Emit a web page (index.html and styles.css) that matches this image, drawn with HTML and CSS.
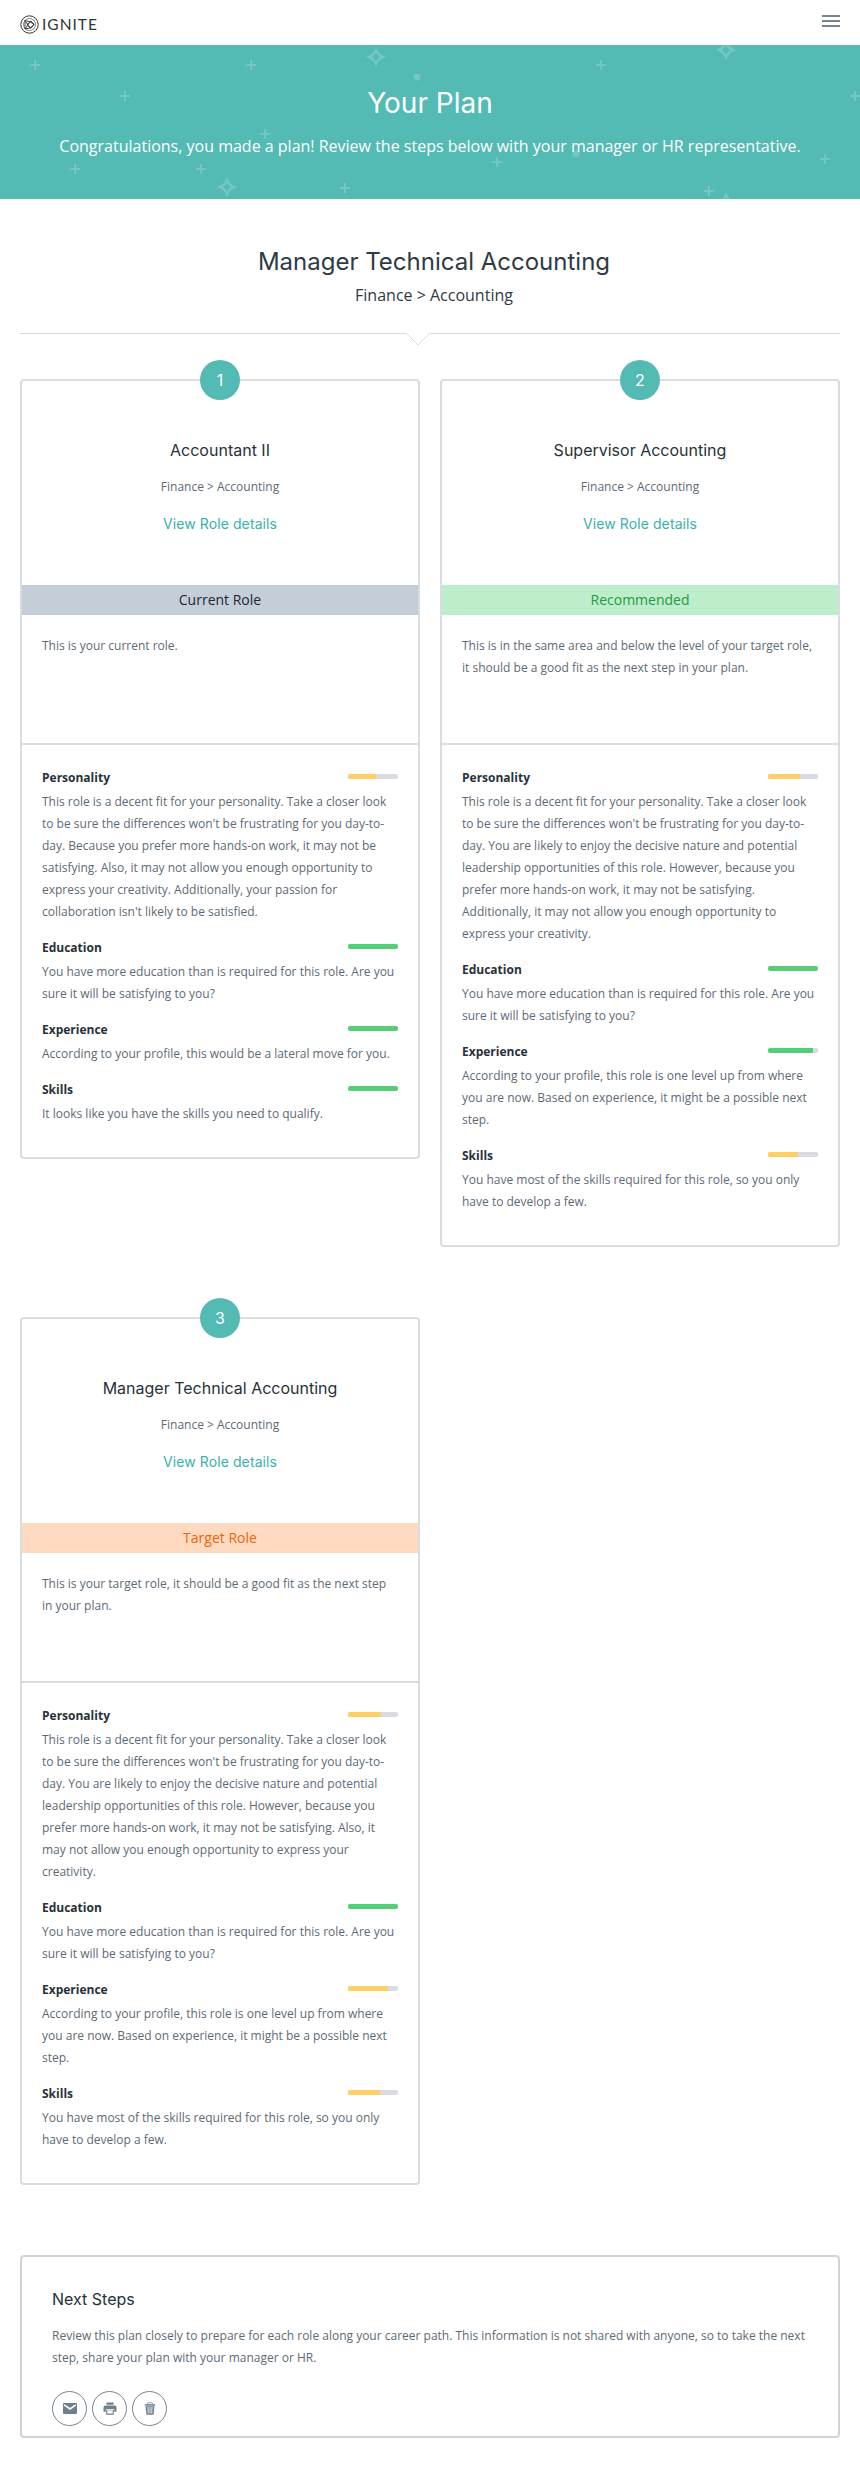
FILE: index.html
```html
<!DOCTYPE html>
<html lang="en">
<head>
<meta charset="utf-8">
<title>Your Plan</title>
<link rel="stylesheet" href="styles.css">
</head>
<body>
<header class="topbar">
  <div class="logo">
    <svg class="logo-mark" width="19" height="19" viewBox="0 0 19 19" fill="none" stroke="#333" stroke-width="1"><circle cx="9.5" cy="9.5" r="8.7"/><circle cx="9.5" cy="9.5" r="6" stroke-width=".6"/><path d="M5 5.5l5 1.2 4 2.800-4 3.500-5 1zM5 5.500l5 7.500M5 14l5-7.300M7 9.500l4-3.500 3 3.500-3 3.800z" stroke-width=".9"/></svg>
    <span class="logo-text">IGNITE</span>
  </div>
  <div class="menu"><i></i><i></i><i></i></div>
</header>
<section class="hero">
  <svg class="hero-art" width="860" height="154" viewBox="0 0 860 154" fill="none" stroke="#fff" stroke-width="2">
    <defs><path id="plus" d="M-5 0H5M0-5V5"/><path id="gem" stroke-width="2.500" d="M0-7Q2-2 7 0Q2 2 0 7Q-2 2-7 0Q-2-2 0-7z"/></defs>
    <use href="#plus" x="35" y="20"/><use href="#plus" x="251" y="20"/><use href="#plus" x="125" y="51"/><use href="#plus" x="265" y="89"/><use href="#plus" x="75" y="124"/><use href="#plus" x="201" y="124"/><use href="#plus" x="345" y="143"/><use href="#plus" x="601" y="20"/><use href="#plus" x="855" y="51"/><use href="#plus" x="497" y="117"/><use href="#plus" x="825" y="114"/><use href="#plus" x="709" y="146"/>
    <use href="#gem" x="376" y="12"/><use href="#gem" x="227" y="142"/><use href="#gem" x="726" y="5"/><use href="#gem" x="726" y="157"/>
    <circle cx="417" cy="32" r="3.5" fill="#fff" stroke="none"/><circle cx="576" cy="109" r="3.5" fill="#fff" stroke="none"/>
  </svg>
  <h1>Your Plan</h1>
  <p>Congratulations, you made a plan! Review the steps below with your manager or HR representative.</p>
</section>
<main>
  <div class="intro">
    <h2>Manager Technical Accounting</h2>
    <p>Finance &gt; Accounting</p>
    <svg class="notch" width="24" height="13" viewBox="0 0 24 13"><path d="M0 0H24L12 12z" fill="#fff"/><path d="M0.5.5L12 12 23.500.5" fill="none" stroke="#d8dde1"/></svg>
  </div>
  <div class="cards">
    <article class="card">
      <span class="badge">1</span>
      <div class="head"><h3>Accountant II</h3><p>Finance &gt; Accounting</p><a>View Role details</a></div>
      <div class="tag current">Current Role</div>
      <p class="why">This is your current role.</p>
      <div class="fit">
        <div class="row"><h4>Personality</h4><span class="bar"><b class="mid" style="width:56%"></b></span></div>
        <p>This role is a decent fit for your personality. Take a closer look to be sure the differences won't be frustrating for you day-to-day. Because you prefer more hands-on work, it may not be satisfying. Also, it may not allow you enough opportunity to express your creativity. Additionally, your passion for collaboration isn't likely to be satisfied.</p>
        <div class="row"><h4>Education</h4><span class="bar"><b style="width:100%"></b></span></div>
        <p>You have more education than is required for this role. Are you sure it will be satisfying to you?</p>
        <div class="row"><h4>Experience</h4><span class="bar"><b style="width:100%"></b></span></div>
        <p>According to your profile, this would be a lateral move for you.</p>
        <div class="row"><h4>Skills</h4><span class="bar"><b style="width:100%"></b></span></div>
        <p>It looks like you have the skills you need to qualify.</p>
      </div>
    </article>
    <article class="card">
      <span class="badge">2</span>
      <div class="head"><h3>Supervisor Accounting</h3><p>Finance &gt; Accounting</p><a>View Role details</a></div>
      <div class="tag recommended">Recommended</div>
      <p class="why">This is in the same area and below the level of your target role, it should be a good fit as the next step in your plan.</p>
      <div class="fit">
        <div class="row"><h4>Personality</h4><span class="bar"><b class="mid" style="width:64%"></b></span></div>
        <p>This role is a decent fit for your personality. Take a closer look to be sure the differences won't be frustrating for you day-to-day. You are likely to enjoy the decisive nature and potential leadership opportunities of this role. However, because you prefer more hands-on work, it may not be satisfying. Additionally, it may not allow you enough opportunity to express your creativity.</p>
        <div class="row"><h4>Education</h4><span class="bar"><b style="width:100%"></b></span></div>
        <p>You have more education than is required for this role. Are you sure it will be satisfying to you?</p>
        <div class="row"><h4>Experience</h4><span class="bar"><b style="width:90%"></b></span></div>
        <p>According to your profile, this role is one level up from where you are now. Based on experience, it might be a possible next step.</p>
        <div class="row"><h4>Skills</h4><span class="bar"><b class="mid" style="width:60%"></b></span></div>
        <p>You have most of the skills required for this role, so you only have to develop a few.</p>
      </div>
    </article>
    <article class="card">
      <span class="badge">3</span>
      <div class="head"><h3>Manager Technical Accounting</h3><p>Finance &gt; Accounting</p><a>View Role details</a></div>
      <div class="tag target">Target Role</div>
      <p class="why">This is your target role, it should be a good fit as the next step in your plan.</p>
      <div class="fit">
        <div class="row"><h4>Personality</h4><span class="bar"><b class="mid" style="width:66%"></b></span></div>
        <p>This role is a decent fit for your personality. Take a closer look to be sure the differences won't be frustrating for you day-to-day. You are likely to enjoy the decisive nature and potential leadership opportunities of this role. However, because you prefer more hands-on work, it may not be satisfying. Also, it may not allow you enough opportunity to express your creativity.</p>
        <div class="row"><h4>Education</h4><span class="bar"><b style="width:100%"></b></span></div>
        <p>You have more education than is required for this role. Are you sure it will be satisfying to you?</p>
        <div class="row"><h4>Experience</h4><span class="bar"><b class="mid" style="width:80%"></b></span></div>
        <p>According to your profile, this role is one level up from where you are now. Based on experience, it might be a possible next step.</p>
        <div class="row"><h4>Skills</h4><span class="bar"><b class="mid" style="width:64%"></b></span></div>
        <p>You have most of the skills required for this role, so you only have to develop a few.</p>
      </div>
    </article>
  </div>
  <section class="next">
    <h3>Next Steps</h3>
    <p>Review this plan closely to prepare for each role along your career path. This information is not shared with anyone, so to take the next step, share your plan with your manager or HR.</p>
    <div class="actions">
      <span><svg width="16" height="16" viewBox="0 0 16 16"><rect x="1" y="2" width="14" height="11" rx="1" fill="#6f7f8c"/><path d="M2.200 3.800L8 8l5.800-4.200" fill="none" stroke="#fff" stroke-width="1.600"/></svg></span>
      <span><svg width="16" height="16" viewBox="0 0 16 16" fill="#6f7f8c"><path d="M4.500 1.500h7v2.200h-7zM3.500 4.500h9a2 2 0 0 1 2 2v4.300h-2.300V8.100H3.800v2.700H1.500V6.500a2 2 0 0 1 2-2zM4.200 8.700h7.600v5H4.200z"/><path d="M5.300 9.300h5.400v3.200H5.300z" fill="#fff"/></svg></span>
      <span><svg width="16" height="16" viewBox="0 0 16 16" fill="#6f7f8c"><path d="M2.800 3.300h10.400v1.400H2.800zM3.500 5.200h9l-1 8.500h-7z"/><path d="M5.500 3.500V2.700Q5.500 1.800 6.500 1.800h3q1 0 1 .9v.8" fill="none" stroke="#6f7f8c" stroke-width=".8"/><path d="M6 6l.3 6.500M8 6v6.500M10 6l-.3 6.500" stroke="#fff" stroke-width=".8"/></svg></span>
    </div>
  </section>
</main>
</body>
</html>
```
FILE: styles.css
```css
* { box-sizing: border-box; }
body, h1, h2, h3, h4, p { margin: 0; font-weight: 400; }
body { font-family: "Open Sans", sans-serif; font-size: 12px; line-height: 22px; color: #5d6a75; background: #fff; }
h1, h2, h3, .badge, .head a { font-family: Inter, sans-serif; }
.topbar { height: 45px; padding: 0 20px; display: flex; justify-content: space-between; }
.logo { display: flex; align-items: center; gap: 3px; padding-top: 3px; color: #333; }
.logo-text { font: 15.5px/19px Lato, sans-serif; letter-spacing: 1px; }
.menu { width: 18px; padding-top: 15px; display: flex; flex-direction: column; gap: 3px; }
.menu i { height: 2px; background: #748592; }
.hero { position: relative; height: 154px; background: #53bab4; color: #fff; text-align: center; padding-top: 38px; }
.hero-art { position: absolute; left: 0; top: 0; opacity: .19; }
.hero h1 { position: relative; font-size: 28px; line-height: 40px; }
.hero p { position: relative; font-size: 16px; line-height: 24px; margin-top: 11px; }
main { padding: 0 20px; }
.intro { position: relative; height: 135px; border-bottom: 1px solid #d4d8dc; padding: 46px 0 0 8px; text-align: center; color: #2f3a44; }
.intro h2 { font-size: 24px; line-height: 34px; }
.intro p { font-size: 16px; line-height: 24px; margin-top: 4px; }
.notch { position: absolute; left: 386px; top: 134px; }
.cards { display: grid; grid-template-columns: 400px 400px; column-gap: 20px; row-gap: 70px; align-items: start; margin-top: 45px; }
.card { position: relative; border: 2px solid #d8dde1; border-radius: 4px; }
.badge { position: absolute; left: 178px; top: -21px; width: 40px; height: 40px; border-radius: 50%; background: #53bab4; color: #fff; font-size: 16px; line-height: 40px; text-align: center; }
.head { height: 204px; padding-top: 55px; text-align: center; }
.head h3 { font-size: 16px; line-height: 28px; color: #27313a; }
.head p { margin-top: 12px; }
.head a { display: block; margin-top: 15px; font-size: 14px; line-height: 22px; letter-spacing: .1px; color: #38b2aa; }
.tag { height: 30px; font-size: 14px; line-height: 30px; text-align: center; }
.current { background: #c5ced8; color: #1d2731; }
.recommended { background: #bdedca; color: #239a47; }
.target { background: #ffdac0; color: #ee6507; }
.why { height: 128px; padding: 20px 20px 0; }
.fit { border-top: 2px solid #d8dde1; padding: 21px 20px 32px; }
.row { display: flex; justify-content: space-between; height: 25px; }
.row h4 { font-size: 12px; line-height: 24px; font-weight: 700; color: #27313a; }
.fit p { margin-bottom: 13px; }
.fit p:last-child { margin-bottom: 0; }
.bar { width: 50px; height: 5px; margin-top: 8px; border-radius: 2px; overflow: hidden; background: #d8dce0; }
.bar b { display: block; height: 5px; background: #55cf77; }
.bar .mid { background: #ffcf66; }
.next { height: 183px; margin-top: 70px; border: 2px solid #ced4d8; border-radius: 4px; padding: 28px 30px 0; }
.next h3 { font-size: 16px; line-height: 28px; color: #27313a; }
.next p { margin-top: 12px; }
.actions { display: flex; gap: 5px; margin-top: 22px; }
.actions span { width: 35px; height: 35px; border: 1px solid #748592; border-radius: 50%; display: flex; align-items: center; justify-content: center; }
```
